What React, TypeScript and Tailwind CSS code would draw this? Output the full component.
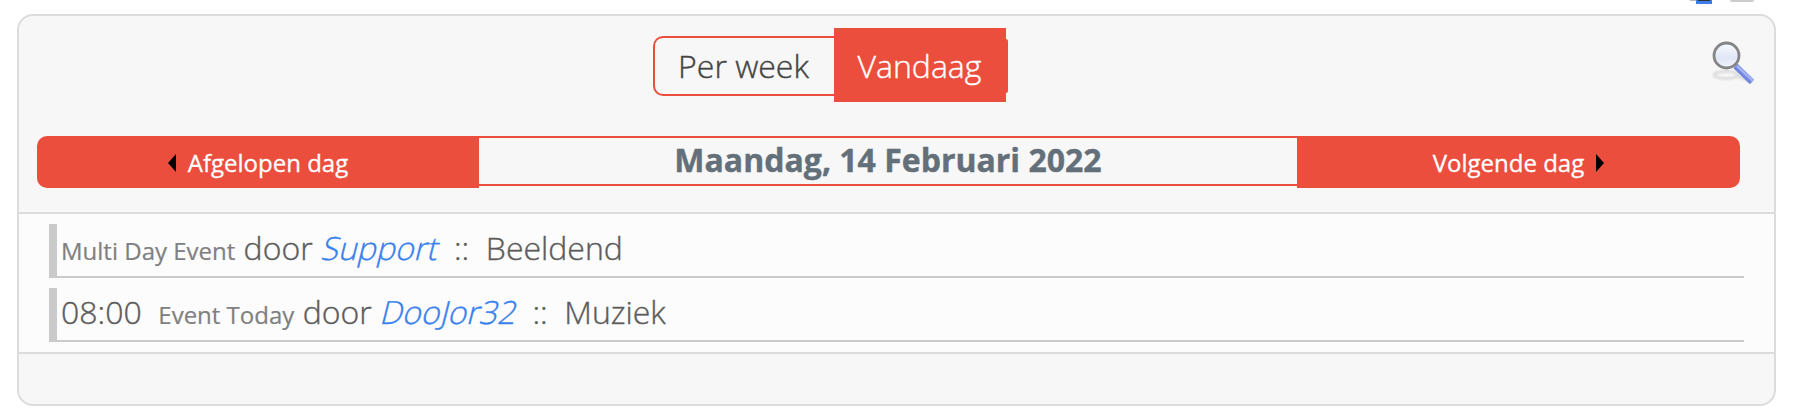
type CalendarEvent = {
  id: number;
  time?: string;
  title: string;
  author: string;
  category: string;
};

const events: CalendarEvent[] = [
  { id: 1, title: "Multi Day Event", author: "Support", category: "Beeldend" },
  { id: 2, time: "08:00", title: "Event Today", author: "DooJor32", category: "Muziek" },
];

function SearchIcon() {
  return (
    <svg width="43" height="44" viewBox="0 0 43 44" aria-hidden="true">
      <defs>
        <linearGradient id="lens" x1="0" y1="0" x2="0" y2="1">
          <stop offset="0" stopColor="#f8fafe" />
          <stop offset="0.6" stopColor="#dfe6f6" />
          <stop offset="1" stopColor="#f2f6fe" />
        </linearGradient>
        <filter id="soft" x="-20%" y="-50%" width="140%" height="200%">
          <feGaussianBlur stdDeviation="0.9" />
        </filter>
        <filter id="edge">
          <feGaussianBlur stdDeviation="0.6" />
        </filter>
      </defs>
      <g filter="url(#soft)" fill="none" stroke="#d9d9d9" strokeWidth="2.5">
        <ellipse cx="15" cy="35" rx="12" ry="3.500" />
        <path d="M26 36l12 5" />
      </g>
      <g filter="url(#edge)">
        <path d="M24.500 26l16.500 16" stroke="#7484dc" strokeWidth="6" />
        <path d="M26 26l16 15" stroke="#a3b3f5" strokeWidth="2.500" />
        <circle cx="15.500" cy="15.500" r="12.500" fill="url(#lens)" stroke="#858585" strokeWidth="2.800" />
      </g>
    </svg>
  );
}

function Toolbar() {
  return (
    <div className="flex h-1 justify-end pr-[46px]">
      <div className="h-px w-1.5 bg-[#bbb]" />
      <div className="h-1 w-4 border-x-2 border-b-[3px] border-[#3b7ded] bg-[#333]" />
      <div className="ml-[18px] h-0.5 w-6 rounded-b-sm bg-[#cccccc]" />
    </div>
  );
}

function EventRow({ event }: { event: CalendarEvent }) {
  return (
    <li className="flex h-[54px] border-l-8 border-[#cacaca]">
      <div className="flex grow items-baseline border-b-2 border-[#cacaca] pl-1 text-[32px] leading-[48px] font-light whitespace-pre text-[#5c5c5c] [-webkit-text-stroke:0.4px]">
        {event.time ? <span>{event.time}{"  "}</span> : null}
        <span className="text-2xl leading-[48px] font-normal text-[#808080] [-webkit-text-stroke:0.2px]">{event.title}</span>
        <span> door </span>
        <a className="origin-[0_32px] -skew-x-[14deg] text-[#3880ec]">{event.author}</a>
        <span>{"  ::  "}{event.category}</span>
      </div>
    </li>
  );
}

export default function App() {
  return (
    <div className="h-[420px] bg-white font-['Open_Sans',sans-serif]">
      <Toolbar />
      <main className="mt-2.5 mr-6 ml-[17px] h-[392px] overflow-hidden rounded-2xl border-2 border-[#dcdcdc] bg-[#f7f7f7]">
        <header className="h-[198px] border-b-2 border-[#dcdcdc] pt-3 pr-[34px] pl-[18px]">
          <div className="flex h-[74px] justify-between pl-[616px] text-[32px] font-light">
            <div className="flex items-center [-webkit-text-stroke:0.4px]">
              <button className="mt-0.5 h-[60px] w-[181px] rounded-l-[10px] border-2 border-r-0 border-[#eb4e3d] pr-0.5 text-[#444]">Per week</button>
              <button className="h-[74px] w-[172px] bg-[#eb4e3d] pt-0.5 pr-px text-white">Vandaag</button>
              <div className="mt-0.5 h-[54px] w-0.5 rounded-r-sm bg-[#eb4e3d]" />
            </div>
            <div className="-mr-3.5 pt-3">
              <SearchIcon />
            </div>
          </div>
          <nav className="mt-[34px] flex">
            <button className="flex h-[52px] w-[442px] items-center justify-center rounded-l-[10px] bg-[#eb4e3d] pt-0.5 text-2xl text-white [-webkit-text-stroke:0.3px]">
              <svg width="8" height="18" className="mr-3"><path d="M8 0v18L0 9z" /></svg>
              Afgelopen dag
            </button>
            <h1 className="h-[50px] grow border-y-2 border-[#eb4e3d] text-center text-[32px] leading-[44px] font-bold text-[#636f79] [-webkit-text-stroke:0.4px]">
              Maandag, 14 Februari 2022
            </h1>
            <button className="flex h-[52px] w-[443px] items-center justify-center rounded-r-[10px] bg-[#eb4e3d] pt-0.5 text-2xl text-white [-webkit-text-stroke:0.3px]">
              Volgende dag
              <svg width="8" height="18" className="ml-3"><path d="M0 0v18l8-9z" /></svg>
            </button>
          </nav>
        </header>
        <ul className="flex h-[140px] flex-col gap-2.5 border-b-2 border-[#dcdcdc] bg-[#fcfcfc] pt-2.5 pr-[30px] pl-[30px]">
          {events.map((event) => (
            <EventRow key={event.id} event={event} />
          ))}
        </ul>
      </main>
    </div>
  );
}
